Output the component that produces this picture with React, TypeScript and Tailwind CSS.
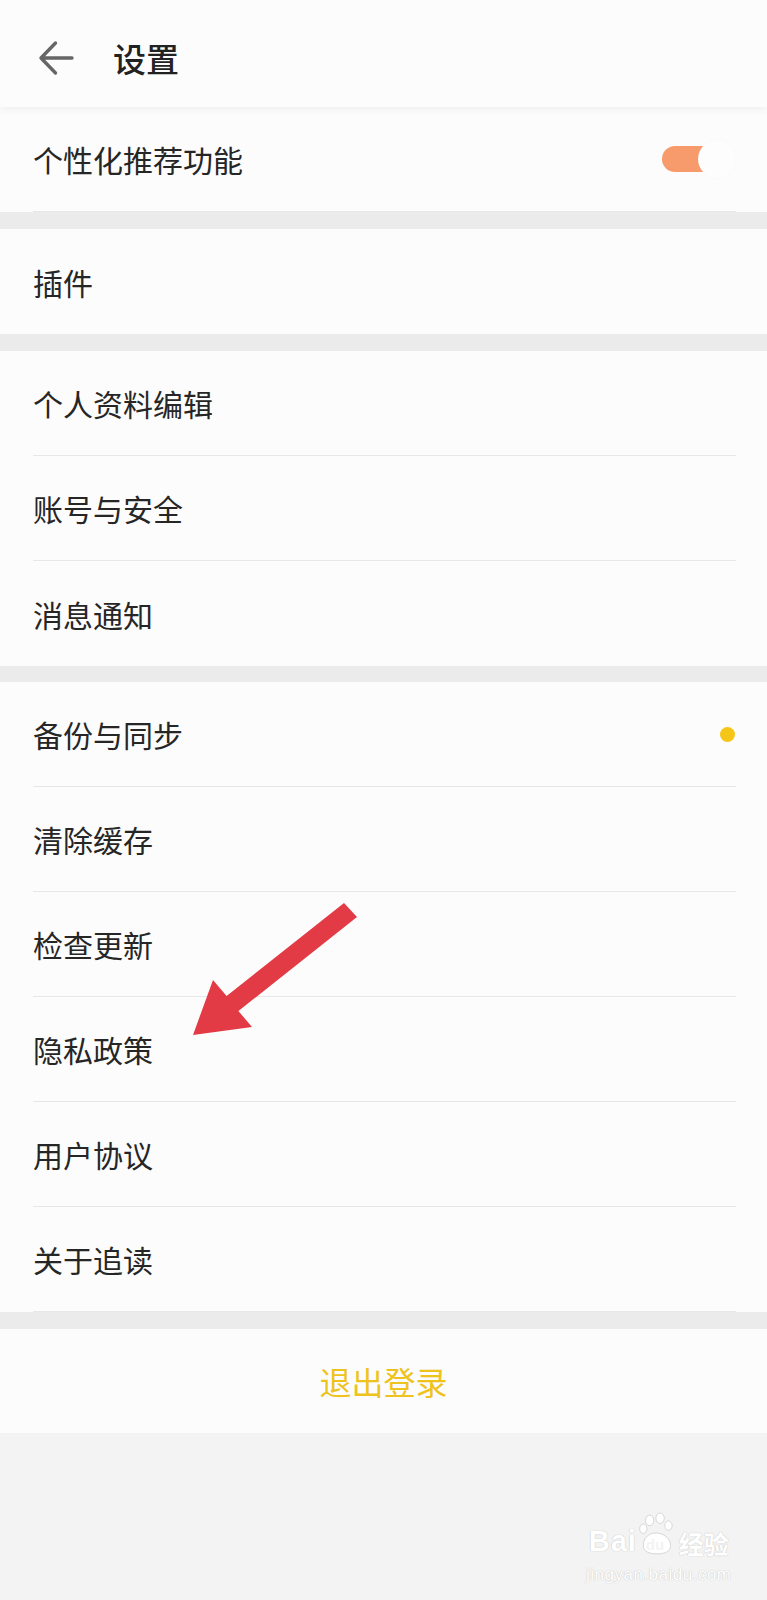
import React from 'react';

type Row = { label: string; dot?: boolean; toggle?: boolean };

const sections: Row[][] = [
  [{ label: '个人资料编辑' }, { label: '账号与安全' }, { label: '消息通知' }],
  [
    { label: '备份与同步', dot: true },
    { label: '清除缓存' },
    { label: '检查更新' },
    { label: '隐私政策' },
    { label: '用户协议' },
    { label: '关于追读' },
  ],
];

function BackArrow() {
  return (
    <svg width="38" height="38" viewBox="0 0 38 38" fill="none">
      <path
        d="M35 19H5M18.5 4L4 19L18.5 34"
        stroke="#666"
        strokeWidth="3.4"
        strokeLinecap="round"
        strokeLinejoin="round"
      />
    </svg>
  );
}

function Toggle() {
  return (
    <div className="relative w-[74px] h-[38px]">
      <div className="absolute left-0 top-[6px] w-[58px] h-[26px] rounded-full bg-[#f89b6c]" />
      <div className="absolute right-0 top-0 w-[38px] h-[38px] rounded-full bg-[#fdfdfd] shadow-[0_0_2px_rgba(0,0,0,0.03)]" />
    </div>
  );
}

function SettingRow({ row, divider }: { row: Row; divider: boolean }) {
  return (
    <div className="h-[105px] pl-[33px] pr-[31px] flex flex-col">
      <div className="flex-1 flex items-center justify-between">
        <span className="text-[30px] leading-none text-[#262626]">{row.label}</span>
        {row.dot && <span className="w-[15px] h-[15px] rounded-full bg-[#f5c518] mr-[1px]" />}
        {row.toggle && <Toggle />}
      </div>
      {divider && <div className="h-px bg-[#e7e7e7]" />}
    </div>
  );
}

function Watermark() {
  return (
    <div className="absolute left-[586px] top-[1512px] flex flex-col items-center text-white [text-shadow:0_0_1px_#c9c9c9,0_0_1px_#c9c9c9] select-none">
      <div className="flex items-end">
        <span className="text-[29px] font-bold leading-none tracking-[1px] font-[family-name:'Liberation_Sans',sans-serif]">Bai</span>
        <div className="relative w-[42px] h-[44px]">
          <svg width="42" height="44" viewBox="0 0 40 42" className="absolute inset-0">
            <g fill="#fff" stroke="#cfcfcf" strokeWidth="0.8">
              <ellipse cx="12" cy="8" rx="4" ry="5" />
              <ellipse cx="22" cy="6" rx="4" ry="5" />
              <ellipse cx="6" cy="16" rx="3.5" ry="4.5" />
              <ellipse cx="30" cy="13" rx="3.5" ry="4.5" />
              <path d="M6 32C6 24 12 20 18 20C25 20 32 25 32 32C32 38 26 40 19 40C12 40 6 38 6 32Z" />
            </g>
          </svg>
          <span className="absolute left-[9px] top-[25px] text-[15px] font-bold leading-none text-[#f3f3f3] [text-shadow:none] font-[family-name:'Liberation_Sans',sans-serif]">du</span>
        </div>
        <span className="text-[25px] font-bold leading-none font-[family-name:'Noto_Sans_CJK_SC',sans-serif]">经验</span>
      </div>
      <span className="mt-[10px] text-[17px] leading-none tracking-[0.5px] font-[family-name:'Liberation_Sans',sans-serif]">jingyan.baidu.com</span>
    </div>
  );
}

export default function App() {
  return (
    <div className="relative w-full min-h-[1600px] bg-[#f3f3f3] font-[family-name:'Noto_Sans_CJK_SC','Noto_Sans',sans-serif]">
      {/* 顶部栏 */}
      <header className="relative z-10 h-[107px] bg-[#fcfcfc] flex items-center pl-[37px] pt-[9px] shadow-[0_3px_8px_rgba(0,0,0,0.05)]">
        <BackArrow />
        <h1 className="ml-[38px] text-[33px] font-medium leading-none text-[#222]">设置</h1>
      </header>

      <div className="bg-[#fcfcfc]">
        <SettingRow row={{ label: '个性化推荐功能', toggle: true }} divider />
      </div>
      <div className="h-[17px] bg-[#ebebeb]" />

      <div className="bg-[#fcfcfc]">
        <SettingRow row={{ label: '插件' }} divider={false} />
      </div>
      <div className="h-[17px] bg-[#ebebeb]" />

      <div className="bg-[#fcfcfc]">
        {sections[0].map((r, i) => (
          <SettingRow key={r.label} row={r} divider={i < sections[0].length - 1} />
        ))}
      </div>
      <div className="h-[16px] bg-[#ebebeb]" />

      <div className="bg-[#fcfcfc]">
        {sections[1].map((r) => (
          <SettingRow key={r.label} row={r} divider />
        ))}
      </div>
      <div className="h-[17px] bg-[#ebebeb]" />

      {/* 退出登录 */}
      <div className="h-[104px] bg-[#fcfcfc] flex items-center justify-center">
        <span className="text-[32px] leading-none text-[#eec31d]">退出登录</span>
      </div>

      {/* 红色箭头标注 */}
      <svg className="absolute left-0 top-0 pointer-events-none" width="767" height="1600" viewBox="0 0 767 1600">
        <polygon
          points="344,903 226.6,996 213,980 193,1035 252,1027 238.4,1011 357,917"
          fill="#e23b45"
        />
      </svg>

      <Watermark />
    </div>
  );
}
